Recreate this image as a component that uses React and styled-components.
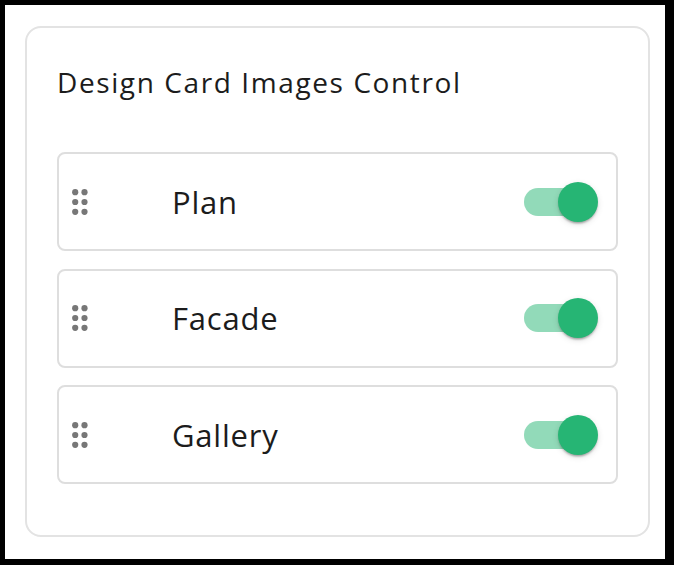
import React, { useState } from "react";
import styled, { createGlobalStyle } from "styled-components";

const Global = createGlobalStyle`
  html, body { margin: 0; padding: 0; background: #000; }
  body { font-family: "Open Sans", "Noto Sans", sans-serif; }
  * { box-sizing: border-box; }
`;

const Frame = styled.div`
  width: 674px;
  height: 565px;
  padding: 5px 9px 6px 5px;
  background: #000;
`;

const Panel = styled.div`
  width: 660px;
  height: 554px;
  background: #fff;
  padding: 21px 15px 22px 20px;
`;

const Card = styled.section`
  width: 625px;
  height: 511px;
  border: 2px solid #e3e3e3;
  border-radius: 16px;
  padding: 30px 30px 0 30px;
  display: flex;
  flex-direction: column;
`;

const Title = styled.h2`
  margin: 0;
  font-weight: 400;
  font-size: 28px;
  line-height: 48px;
  color: #1c1c1c;
  letter-spacing: 1.6px;
`;

const List = styled.div`
  margin-top: 46px;
  display: flex;
  flex-direction: column;
  gap: 17.5px;
`;

const Row = styled.div`
  height: 99px;
  border: 2px solid #dedede;
  border-radius: 8px;
  display: flex;
  align-items: center;
  padding: 0 18px 0 13px;
`;

const Handle = styled.svg`
  width: 17px;
  height: 26px;
  flex: none;
  color: #777;
`;

const Label = styled.span`
  margin-left: 83px;
  font-size: 31px;
  letter-spacing: 0.8px;
  color: #1c1c1c;
  flex: 1;
`;

const SwitchBox = styled.button`
  position: relative;
  width: 74px;
  height: 40px;
  padding: 0;
  border: 0;
  background: transparent;
  cursor: pointer;
  flex: none;
`;

const Track = styled.span`
  position: absolute;
  left: 0;
  top: 6px;
  width: 68px;
  height: 28px;
  border-radius: 14px;
  background: ${(p) => (p.$on ? "rgba(38,181,116,0.5)" : "rgba(0,0,0,0.38)")};
`;

const Thumb = styled.span`
  position: absolute;
  top: 0;
  left: ${(p) => (p.$on ? "34px" : "0")};
  width: 40px;
  height: 40px;
  border-radius: 50%;
  background: ${(p) => (p.$on ? "#26b574" : "#fafafa")};
  box-shadow: 0 3px 2px -2px rgba(0, 0, 0, 0.2), 0 2px 2px 0 rgba(0, 0, 0, 0.14),
    0 2px 6px 0 rgba(0, 0, 0, 0.12);
`;

const DragIcon = () => (
  <Handle viewBox="0 0 17 26" aria-hidden="true">
    {[3.2, 13, 22.8].map((cy) =>
      [3.2, 12.5].map((cx) => (
        <circle key={`${cx}-${cy}`} cx={cx} cy={cy} r="3.1" fill="currentColor" />
      ))
    )}
  </Handle>
);

const Toggle = ({ on, onClick }) => (
  <SwitchBox onClick={onClick} aria-pressed={on}>
    <Track $on={on} />
    <Thumb $on={on} />
  </SwitchBox>
);

export default function App() {
  const [items, setItems] = useState([
    { name: "Plan", on: true },
    { name: "Facade", on: true },
    { name: "Gallery", on: true },
  ]);
  const toggle = (i) =>
    setItems((prev) => prev.map((it, j) => (j === i ? { ...it, on: !it.on } : it)));
  return (
    <>
      <Global />
      <Frame>
        <Panel>
          <Card>
            <Title>Design Card Images Control</Title>
            <List>
              {items.map((it, i) => (
                <Row key={it.name}>
                  <DragIcon />
                  <Label>{it.name}</Label>
                  <Toggle on={it.on} onClick={() => toggle(i)} />
                </Row>
              ))}
            </List>
          </Card>
        </Panel>
      </Frame>
    </>
  );
}
